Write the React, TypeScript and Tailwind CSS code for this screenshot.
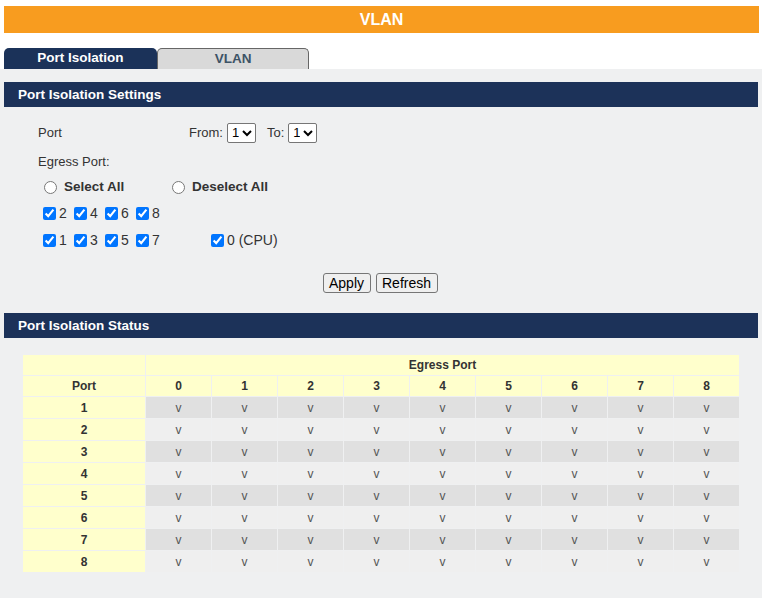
import React from 'react';

const ports = [1, 2, 3, 4, 5, 6, 7, 8];
const egress = [0, 1, 2, 3, 4, 5, 6, 7, 8];

const SectionHeader = ({ title }: { title: string }) => (
  <div className="mx-1 h-[25px] bg-[#1c3259] flex items-center pl-[14px] pt-[1px]">
    <span className="text-white font-bold text-[13.5px]">{title}</span>
  </div>
);

const Check = ({ label, w = 'w-[31px]' }: { label: string; w?: string }) => (
  <label className={`${w} flex items-center text-[14px] text-[#333]`}>
    <input type="checkbox" defaultChecked className="w-[13px] h-[13px] m-0 mr-[3px] accent-[#0075ff]" />
    <span>{label}</span>
  </label>
);

export default function App() {
  return (
    <div className="w-[771px] h-[598px] bg-white overflow-hidden" style={{ fontFamily: '"Liberation Sans", Arial, sans-serif' }}>
      <div className="mt-[6px] ml-1 w-[755px] h-[27px] bg-[#f89c1f] flex items-center justify-center">
        <span className="text-white font-bold text-[16px]">VLAN</span>
      </div>

      <div className="mt-[15px] ml-1 flex h-[21px]">
        <div className="w-[153px] bg-[#1b3259] rounded-t-[5px] flex items-center justify-center">
          <span className="text-white font-bold text-[13.5px]">Port Isolation</span>
        </div>
        <div className="w-[152px] bg-[#d9d9d9] border border-b-0 border-[#666] rounded-t-[5px] flex items-center justify-center">
          <span className="text-[#3d5366] font-bold text-[13.5px]">VLAN</span>
        </div>
      </div>

      <div className="w-[762px] h-[529px] bg-[#eff0f1] pt-[13px]">
        <SectionHeader title="Port Isolation Settings" />

        <div className="pl-[38px] text-[13px] text-[#333]">
          <div className="mt-[14px] h-[23px] flex items-center">
            <span className="w-[151px]">Port</span>
            <span>From:</span>
            <select className="ml-[4px] h-[20px] w-[29px] border border-[#767676] rounded-[2px] bg-white text-[13px] text-black">
              <option>1</option>
            </select>
            <span className="ml-[11px]">To:</span>
            <select className="ml-[4px] h-[20px] w-[29px] border border-[#767676] rounded-[2px] bg-white text-[13px] text-black">
              <option>1</option>
            </select>
          </div>

          <div className="mt-[6px] h-[23px] flex items-center">Egress Port:</div>

          <div className="mt-[3px] h-[23px] flex items-center pl-[6px]">
            <label className="w-[128px] flex items-center">
              <input type="radio" name="sel" className="w-[13px] h-[13px] m-0 mr-[7px]" />
              <span className="font-bold text-[13.5px] text-[#333]">Select All</span>
            </label>
            <label className="flex items-center">
              <input type="radio" name="sel" className="w-[13px] h-[13px] m-0 mr-[7px]" />
              <span className="font-bold text-[13.5px] text-[#333]">Deselect All</span>
            </label>
          </div>

          <div className="mt-[3px] h-[23px] flex items-center pl-[5px]">
            <Check label="2" />
            <Check label="4" />
            <Check label="6" />
            <Check label="8" />
          </div>

          <div className="mt-[4px] h-[23px] flex items-center pl-[5px]">
            <Check label="1" />
            <Check label="3" />
            <Check label="5" />
            <Check label="7" w="w-[75px]" />
            <Check label="0 (CPU)" w="w-auto" />
          </div>
        </div>

        <div className="mt-[21px] flex justify-center gap-[5px] pr-[2px]">
          <button className="h-[20px] w-[48px] border border-[#767676] rounded-[3px] bg-[#efefef] text-[14px] text-black leading-none">Apply</button>
          <button className="h-[20px] w-[62px] border border-[#767676] rounded-[3px] bg-[#efefef] text-[14px] text-black leading-none">Refresh</button>
        </div>

        <div className="mt-[20px]">
          <SectionHeader title="Port Isolation Status" />
        </div>

        <div className="mt-[16px] ml-[22px]">
          <table className="border-separate border-spacing-[1px] text-[12px]">
            <thead>
              <tr className="h-[20px]">
                <th className="w-[122px] bg-[#ffffcc]"></th>
                <th colSpan={9} className="bg-[#ffffcc] font-bold text-[#333]">Egress Port</th>
              </tr>
              <tr className="h-[20px]">
                <th className="bg-[#ffffcc] font-bold text-[#333]">Port</th>
                {egress.map((e) => (
                  <th key={e} className="w-[65px] bg-[#ffffcc] font-bold text-[#333]">{e}</th>
                ))}
              </tr>
            </thead>
            <tbody>
              {ports.map((p, i) => (
                <tr key={p} className="h-[21px]">
                  <td className="bg-[#ffffcc] text-center font-bold text-[#333]">{p}</td>
                  {egress.map((e) => (
                    <td key={e} className={`${i % 2 === 0 ? 'bg-[#e0e0e0]' : 'bg-[#efefef]'} text-center text-[#555]`}>v</td>
                  ))}
                </tr>
              ))}
            </tbody>
          </table>
        </div>
      </div>
    </div>
  );
}
